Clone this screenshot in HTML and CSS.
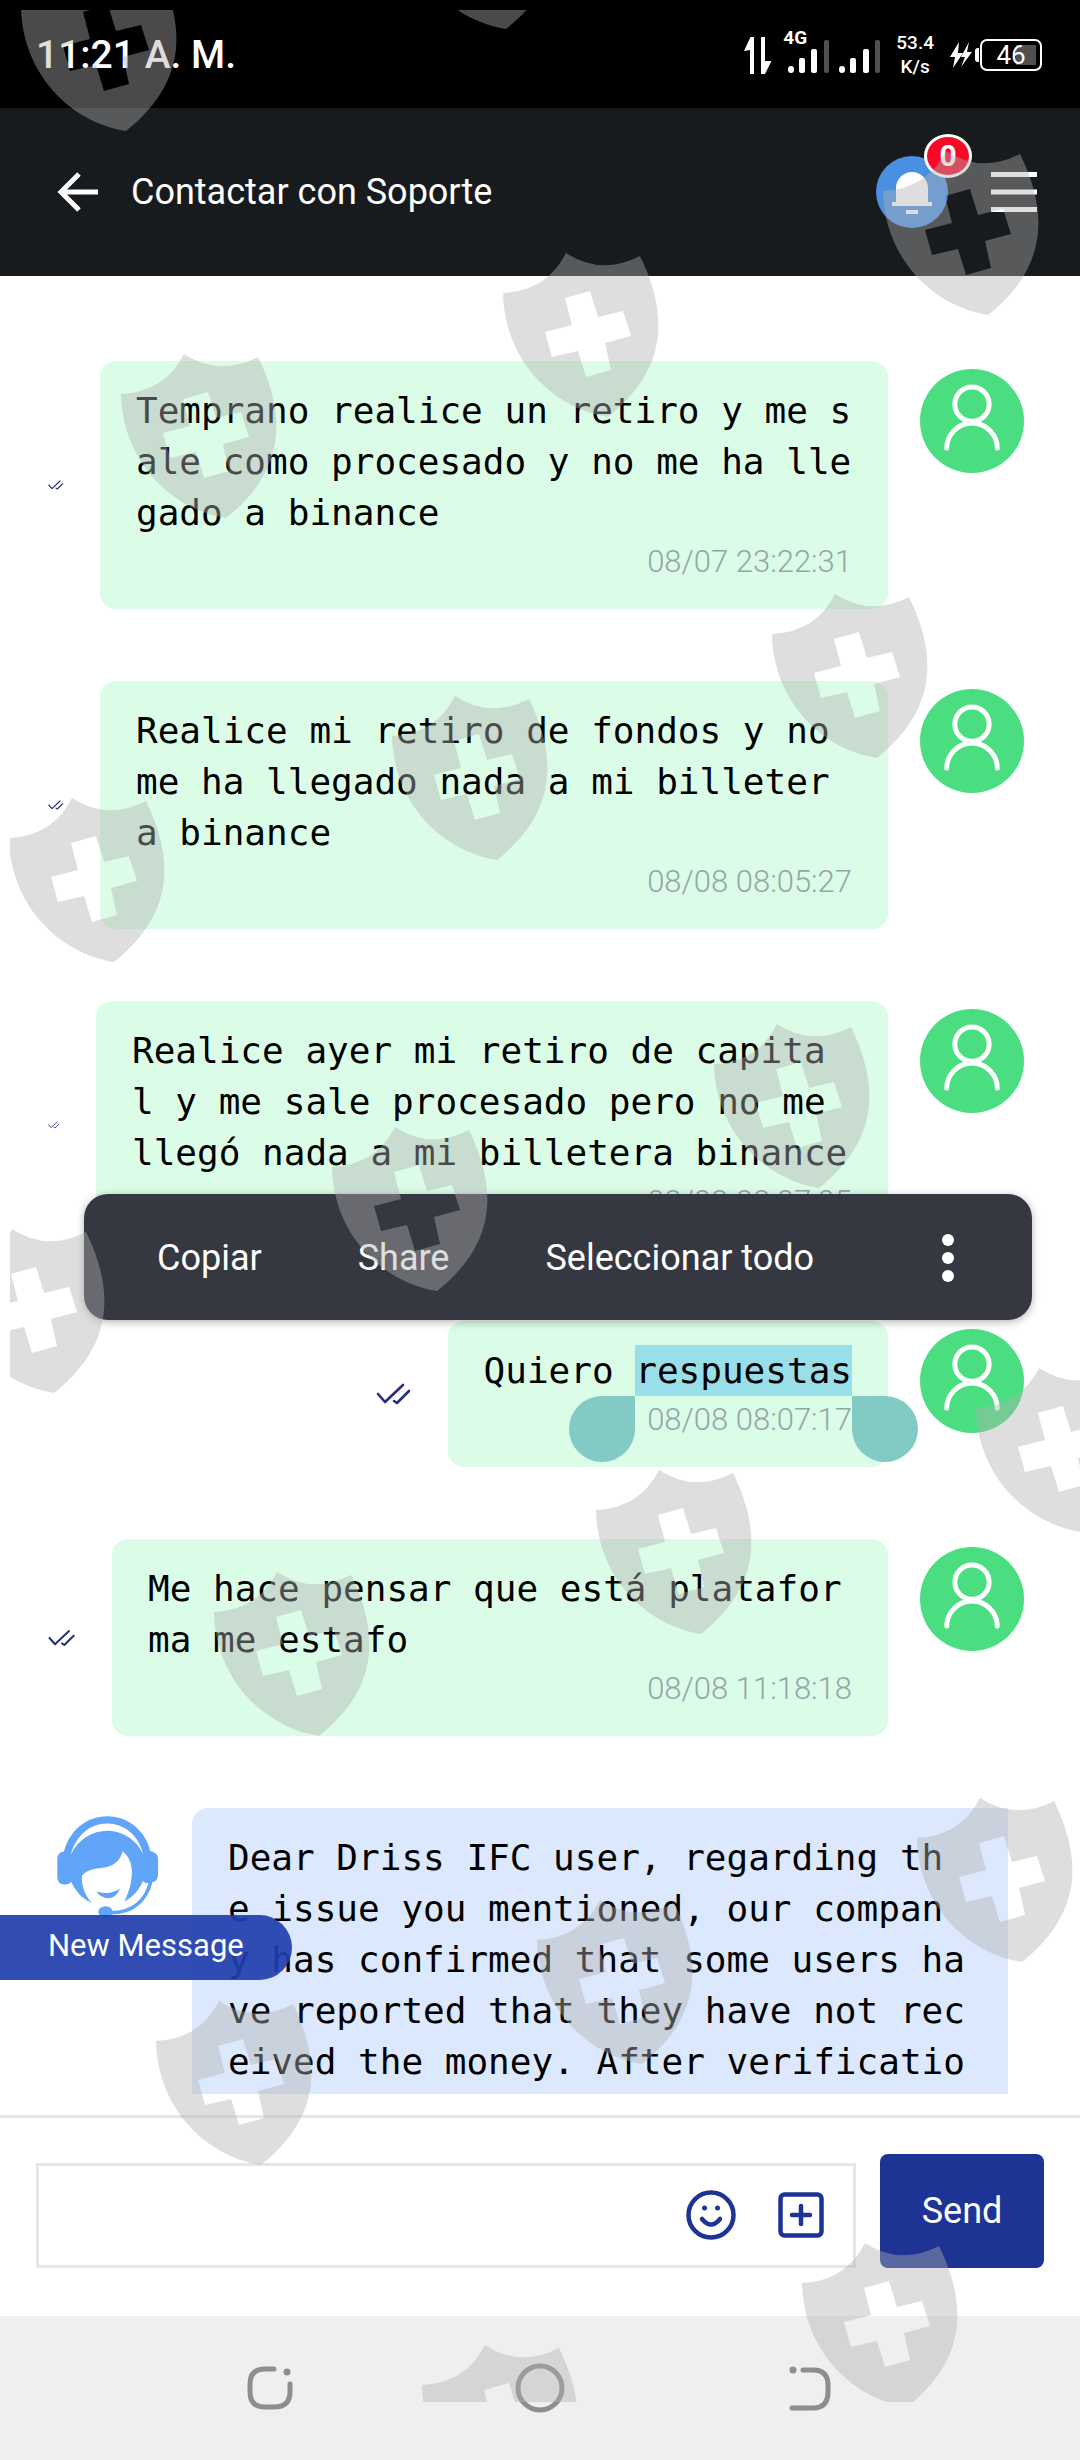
FILE: index.html
```html
<!DOCTYPE html>
<html lang="es">
<head>
  <meta charset="UTF-8">
  <meta name="viewport" content="width=device-width, initial-scale=1">
  <title>Contactar con Soporte</title>
  <link rel="stylesheet" href="styles.css">
</head>
<body>

<!-- Iconos reutilizables -->
<svg class="sprite" aria-hidden="true">
  <symbol id="check" viewBox="0 0 36 22">
    <path d="M2 11l7 8L27 2M18 18l3 2L33 8" fill="none" stroke="#25307c" stroke-width="2.6" stroke-linecap="round" stroke-linejoin="round"/>
  </symbol>
  <symbol id="persona" viewBox="0 0 105 105">
    <circle cx="52.5" cy="52.5" r="52.5" fill="#4ade80"/>
    <g fill="none" stroke="#fff" stroke-width="5" stroke-linecap="round">
      <circle cx="52.5" cy="35.5" r="17.3"/>
      <path d="M27 80a25.5 25.5 0 0 1 51 0"/>
    </g>
  </symbol>
  <symbol id="escudo" viewBox="-70 -5 170 175" overflow="visible">
    <path fill-rule="evenodd" d="M-63 40Q-19 38 0 0Q35 23 74 3C104 64 100 118 42 164C-15 155 -62 105 -63 40ZM-1 45L6 72L-21 79L-14 104L12 98L20 124L45 117L39 90L65 83L57 58L32 64L24 38Z"/>
  </symbol>
</svg>

<div class="estado">
  <span class="hora">11:21 A. M.</span>
  <div class="estado-iconos">
    <svg class="datos" viewBox="0 0 28 38" fill="#fff">
      <path d="M0 15L6.500 1H10V38H6V14ZM17 1h4v24h6.500l-6.500 13h-4z"/>
    </svg>
    <div class="senal">
      <span class="red">4G</span>
      <svg viewBox="0 0 92 34" fill="#fff">
        <rect y="26" width="6" height="7" rx="3"/><rect x="11" y="18" width="6" height="15" rx="2"/><rect x="23" y="9" width="6" height="24" rx="2"/><rect x="36" y="0" width="5" height="33" rx="2" fill="#505050"/>
        <rect x="51" y="26" width="6" height="7" rx="3"/><rect x="62" y="18" width="6" height="15" rx="2"/><rect x="75" y="9" width="6" height="24" rx="2"/><rect x="87" y="0" width="5" height="33" rx="2" fill="#505050"/>
      </svg>
    </div>
    <span class="velocidad">53.4<br>K/s</span>
    <svg class="rayo" viewBox="0 0 22 26" fill="#fff">
      <path d="M9 0L0 15h5L3 26L13 11H8ZM19 0L11 15h4L11 25L22 10H17Z"/>
    </svg>
    <span class="bateria">46</span>
  </div>
</div>

<header class="cabecera">
  <button class="volver" aria-label="Volver">
    <svg viewBox="0 0 42 40" fill="none" stroke="#fff" stroke-width="5">
      <path d="M22 2L4 20l18 18M3 20h38"/>
    </svg>
  </button>
  <h1>Contactar con Soporte</h1>
  <button class="campana" aria-label="Notificaciones">
    <svg viewBox="0 0 72 72">
      <circle cx="36" cy="36" r="36" fill="#4a90e2"/>
      <path d="M20 46V32a16 16 0 0 1 32 0v14h4v4H16v-4zM30 54h12v4H30z" fill="#fff"/>
    </svg>
    <span class="contador">0</span>
  </button>
  <button class="menu" aria-label="Menú">
    <svg viewBox="0 0 46 40" fill="#fff"><path d="M0 0h46v5H0zM0 17.500h46v5H0zM0 35h46v5H0z"/></svg>
  </button>
</header>

<main class="chat">
  <div class="mensaje enviado">
    <svg class="check chico"><use href="#check"/></svg>
    <div class="burbuja">
      <p>Temprano realice un retiro y me s<br>ale como procesado y no me ha lle<br>gado a binance</p>
      <time>08/07 23:22:31</time>
    </div>
    <svg class="avatar"><use href="#persona"/></svg>
  </div>

  <div class="mensaje enviado">
    <svg class="check chico"><use href="#check"/></svg>
    <div class="burbuja">
      <p>Realice mi retiro de fondos y no<br>me ha llegado nada a mi billeter<br>a binance</p>
      <time>08/08 08:05:27</time>
    </div>
    <svg class="avatar"><use href="#persona"/></svg>
  </div>

  <div class="mensaje enviado">
    <svg class="check mini"><use href="#check"/></svg>
    <div class="burbuja">
      <p>Realice ayer mi retiro de capita<br>l y me sale procesado pero no me<br>llegó nada a mi billetera binance</p>
      <time>08/08 08:07:05</time>
    </div>
    <svg class="avatar"><use href="#persona"/></svg>
  </div>

  <div class="mensaje enviado corto">
    <svg class="check"><use href="#check"/></svg>
    <div class="burbuja">
      <p>Quiero <span class="seleccion">respuestas</span></p>
      <time>08/08 08:07:17</time>
    </div>
    <svg class="avatar"><use href="#persona"/></svg>
  </div>

  <div class="mensaje enviado">
    <svg class="check medio"><use href="#check"/></svg>
    <div class="burbuja">
      <p>Me hace pensar que está platafor<br>ma me estafo</p>
      <time>08/08 11:18:18</time>
    </div>
    <svg class="avatar"><use href="#persona"/></svg>
  </div>

  <div class="mensaje recibido">
    <svg class="avatar" viewBox="168 105 315 315" fill="#60a5fa">
      <path d="M190 222C205 150 260 106 323 106S441 150 455 216L432 222C420 165 375 128 323 128S228 165 213 222Z"/>
      <path d="M195 212Q172 214 172 235V290Q172 313 195 313Q208 313 216 303L213 215ZM450 210Q477 215 477 232V285Q476 303 460 305L440 309L430 300V215Z"/>
      <path d="M213 222C235 175 280 150 323 150S412 175 432 222V300C420 330 400 350 375 364C392 330 398 300 398 270C395 240 385 225 370 212C362 240 345 255 320 260C290 264 262 266 247 285C243 310 255 345 276 368C245 355 222 325 213 300Z"/>
      <path d="M291 334Q325 346 362 325Q350 354 325 354Q300 352 291 334Z"/>
      <path d="M455 303C442 360 400 400 330 398" fill="none" stroke="#60a5fa" stroke-width="11"/>
      <ellipse cx="318" cy="396" rx="22" ry="18"/>
    </svg>
    <div class="burbuja">
      <p>Dear Driss IFC user, regarding th<br>e issue you mentioned, our compan<br>y has confirmed that some users ha<br>ve reported that they have not rec<br>eived the money. After verificatio</p>
    </div>
  </div>
</main>

<form class="redactar">
  <div class="campo">
    <input type="text" aria-label="Mensaje">
    <button type="button" aria-label="Emoji">
      <svg viewBox="0 0 50 50" fill="none" stroke="#1e3494" stroke-width="4.500" stroke-linecap="round">
        <circle cx="25" cy="25" r="22.500"/>
        <path d="M16 29q9 11 18 0"/>
        <circle cx="18.500" cy="18" r="2.500" fill="#1e3494" stroke="none"/><circle cx="31.500" cy="18" r="2.500" fill="#1e3494" stroke="none"/>
      </svg>
    </button>
    <button type="button" aria-label="Adjuntar">
      <svg viewBox="0 0 50 50" fill="none" stroke="#1e3494" stroke-width="4.500" stroke-linecap="round">
        <rect x="4.500" y="4.500" width="41" height="41" rx="4"/>
        <path d="M25 16v18M16 25h18"/>
      </svg>
    </button>
  </div>
  <button type="submit" class="enviar">Send</button>
</form>

<nav class="sistema">
  <button aria-label="Recientes">
    <svg viewBox="0 0 50 50" fill="none" stroke="#8e8e8e" stroke-width="5" stroke-linecap="round">
      <path d="M29 6H20Q5 6 5 21V29Q5 44 20 44H29Q45 44 45 29V21"/>
      <circle cx="42" cy="9" r="3.500" fill="#8e8e8e" stroke="none"/>
    </svg>
  </button>
  <button aria-label="Inicio">
    <svg viewBox="0 0 50 50" fill="none" stroke="#8e8e8e" stroke-width="5"><circle cx="25" cy="25" r="22"/></svg>
  </button>
  <button aria-label="Atrás">
    <svg viewBox="0 0 50 50" fill="none" stroke="#8e8e8e" stroke-width="5" stroke-linecap="round">
      <path d="M18 7H28Q43 7 43 22V29Q43 45 28 45H7"/>
      <circle cx="8" cy="7" r="3.500" fill="#8e8e8e" stroke="none"/>
    </svg>
  </button>
</nav>

<!-- Menú flotante de selección -->
<div class="opciones">
  <button>Copiar</button>
  <button>Share</button>
  <button>Seleccionar todo</button>
  <button class="mas" aria-label="Más opciones">
    <svg viewBox="0 0 12 50" fill="#fff"><circle cx="6" cy="7" r="6"/><circle cx="6" cy="25" r="6"/><circle cx="6" cy="43" r="6"/></svg>
  </button>
</div>

<button class="nuevo">New Message</button>

<!-- Marca de agua -->
<svg class="marca" aria-hidden="true">
  <clipPath id="zona"><rect x="10" y="10" width="100%" height="2392"/></clipPath>
  <g clip-path="url(#zona)">
    <g transform="translate(-70 -5)">
      <use href="#escudo" width="170" height="175" x="84" y="-33"/>
      <use href="#escudo" width="170" height="175" x="464" y="-135"/>
      <use href="#escudo" width="170" height="175" x="946" y="151"/>
      <use href="#escudo" width="170" height="175" x="566" y="253"/>
      <use href="#escudo" width="170" height="175" x="184" y="354"/>
      <use href="#escudo" width="170" height="175" x="835" y="594"/>
      <use href="#escudo" width="170" height="175" x="455" y="696"/>
      <use href="#escudo" width="170" height="175" x="72" y="798"/>
      <use href="#escudo" width="170" height="175" x="777" y="1024"/>
      <use href="#escudo" width="170" height="175" x="395" y="1127"/>
      <use href="#escudo" width="170" height="175" x="12" y="1229"/>
      <use href="#escudo" width="170" height="175" x="1039" y="1368"/>
      <use href="#escudo" width="170" height="175" x="659" y="1470"/>
      <use href="#escudo" width="170" height="175" x="277" y="1572"/>
      <use href="#escudo" width="170" height="175" x="980" y="1798"/>
      <use href="#escudo" width="170" height="175" x="600" y="1900"/>
      <use href="#escudo" width="170" height="175" x="219" y="2001"/>
      <use href="#escudo" width="170" height="175" x="865" y="2243"/>
      <use href="#escudo" width="170" height="175" x="485" y="2345"/>
    </g>
  </g>
</svg>

</body>
</html>
```

FILE: styles.css
```css
* {
  box-sizing: border-box;
}
body {
  margin: 0;
  height: 100vh;
  display: flex;
  flex-direction: column;
  position: relative;
  overflow: hidden;
  background-color: white;
  font-family: Roboto, sans-serif;
}
button {
  background: none;
  border: none;
  padding: 0;
  color: white;
  font-family: inherit;
  font-size: 36px;
  cursor: pointer;
}
svg {
  display: block;
}
.sprite {
  position: absolute;
  width: 0;
  height: 0;
}

/* Barra de estado */
.estado {
  flex: none;
  height: 108px;
  padding: 2px 38px 0 36px;
  display: flex;
  align-items: center;
  justify-content: space-between;
  background-color: black;
  color: white;
}
.hora {
  font-size: 39px;
  font-weight: 500;
}
.estado-iconos {
  display: flex;
  align-items: center;
}
.datos {
  width: 28px;
  height: 38px;
}
.senal {
  position: relative;
  margin-left: 16px;
  padding-top: 4px;
}
.senal svg {
  width: 92px;
  height: 34px;
}
.red {
  position: absolute;
  left: -5px;
  top: -10px;
  font-size: 19px;
  line-height: 24px;
  font-weight: 700;
}
.velocidad {
  margin-left: 16px;
  font-size: 19px;
  line-height: 24px;
  font-weight: 500;
  text-align: center;
}
.rayo {
  width: 22px;
  height: 26px;
  margin-left: 16px;
}
.bateria {
  position: relative;
  width: 62px;
  height: 32px;
  margin-left: 8px;
  border: 2px solid white;
  border-radius: 7px;
  background: linear-gradient(#505050, #505050) 34px 4px / 20px 20px no-repeat;
  font-size: 26px;
  line-height: 28px;
  text-align: center;
}
.bateria::before {
  content: "";
  position: absolute;
  left: -7px;
  top: 7px;
  width: 4px;
  height: 14px;
  border-radius: 3px 0 0 3px;
  background-color: white;
}

/* Cabecera */
.cabecera {
  flex: none;
  height: 168px;
  padding: 0 43px 0 57px;
  display: flex;
  align-items: center;
  background-color: #181b1e;
  color: white;
}
.volver svg {
  width: 42px;
  height: 40px;
}
.cabecera h1 {
  flex: 1;
  margin: 0 0 0 32px;
  font-size: 36px;
  font-weight: 400;
}
.campana {
  position: relative;
}
.campana svg {
  width: 72px;
  height: 72px;
}
.contador {
  position: absolute;
  left: 48px;
  top: -22px;
  width: 48px;
  height: 44px;
  border: 3px solid white;
  border-radius: 50%;
  background-color: #f50a28;
  font-size: 30px;
  line-height: 38px;
  font-weight: 700;
}
.menu {
  margin-left: 43px;
}
.menu svg {
  width: 46px;
  height: 40px;
}

/* Mensajes */
.chat {
  flex: 1;
  min-height: 0;
  margin-bottom: 21px;
  padding-top: 85px;
  display: flex;
  flex-direction: column;
  gap: 72px;
  overflow: hidden;
}
.mensaje {
  flex: none;
  display: flex;
  align-items: center;
}
.enviado {
  padding: 0 56px 0 48px;
}
.recibido {
  padding: 0 72px 0 56px;
}
.check {
  flex: none;
  width: 36px;
  height: 22px;
  margin-right: 36px;
}
.check.medio {
  width: 28px;
}
.check.chico {
  width: 16px;
}
.check.mini {
  width: 12px;
}
.avatar {
  flex: none;
  align-self: flex-start;
  width: 104px;
  height: 104px;
  margin: 8px 0 0 32px;
}
.recibido .avatar {
  margin: 8px 32px 0 0;
}
.burbuja {
  flex: 1;
  padding: 24px 36px;
  border-radius: 16px;
  background-color: #dbfce7;
}
.corto {
  justify-content: flex-end;
}
.corto .burbuja {
  flex: none;
}
.recibido .burbuja {
  border-radius: 16px 0 0 0;
  background-color: #dbe8fe;
}
.burbuja p {
  margin: 0;
  font-family: "DejaVu Sans Mono", monospace;
  font-size: 36px;
  line-height: 51px;
  white-space: nowrap;
}
.burbuja time {
  display: block;
  font-size: 31px;
  line-height: 47px;
  font-weight: 300;
  text-align: right;
  color: #94a6a8;
}
.seleccion {
  position: relative;
  display: inline-block;
  background-color: #98dfe9;
}
.seleccion::before,
.seleccion::after {
  content: "";
  position: absolute;
  top: 51px;
  width: 66px;
  height: 66px;
  background-color: #82cbc4;
}
.seleccion::before {
  right: 100%;
  border-radius: 50% 0 50% 50%;
}
.seleccion::after {
  left: 100%;
  border-radius: 0 50% 50% 50%;
}

/* Menú de selección */
.opciones {
  position: absolute;
  top: 1194px;
  left: 84px;
  right: 48px;
  height: 126px;
  padding: 2px 53px 0 25px;
  display: flex;
  border-radius: 24px;
  background-color: #353840;
  box-shadow: 0 2px 8px rgba(0,0,0,0.3);
}
.opciones button {
  padding: 0 48px;
}
.opciones .mas {
  margin-left: auto;
  padding: 0 25px;
}
.mas svg {
  width: 12px;
  height: 50px;
}
.nuevo {
  position: absolute;
  left: 0;
  bottom: 480px;
  height: 65px;
  padding: 0 48px 4px;
  border-radius: 0 33px 33px 0;
  background-color: rgba(31,62,173,0.92);
  font-size: 31px;
}

/* Caja de texto */
.redactar {
  flex: none;
  padding: 36px 36px 48px;
  display: flex;
  align-items: flex-end;
  gap: 24px;
  border-top: 3px solid #e6e6e6;
}
.campo {
  flex: 1;
  height: 105px;
  padding: 0 27px 2px 0;
  display: flex;
  align-items: center;
  gap: 40px;
  border: 3px solid #e6e6e6;
}
.campo input {
  flex: 1;
  min-width: 0;
  height: 100%;
  padding: 0 24px;
  border: none;
  outline: none;
  font-size: 36px;
}
.campo svg {
  width: 50px;
  height: 50px;
}
.enviar {
  width: 164px;
  height: 114px;
  border-radius: 8px;
  background-color: #1e3494;
}

/* Barra de navegación */
.sistema {
  flex: none;
  height: 144px;
  padding: 0 12.5%;
  display: flex;
  background-color: #efefef;
}
.sistema button {
  flex: 1;
}
.sistema svg {
  width: 50px;
  height: 50px;
  margin: auto;
}

.marca {
  position: absolute;
  left: 0;
  top: 0;
  width: 100%;
  height: 100%;
  fill: rgba(176,176,176,0.42);
  pointer-events: none;
}
```
